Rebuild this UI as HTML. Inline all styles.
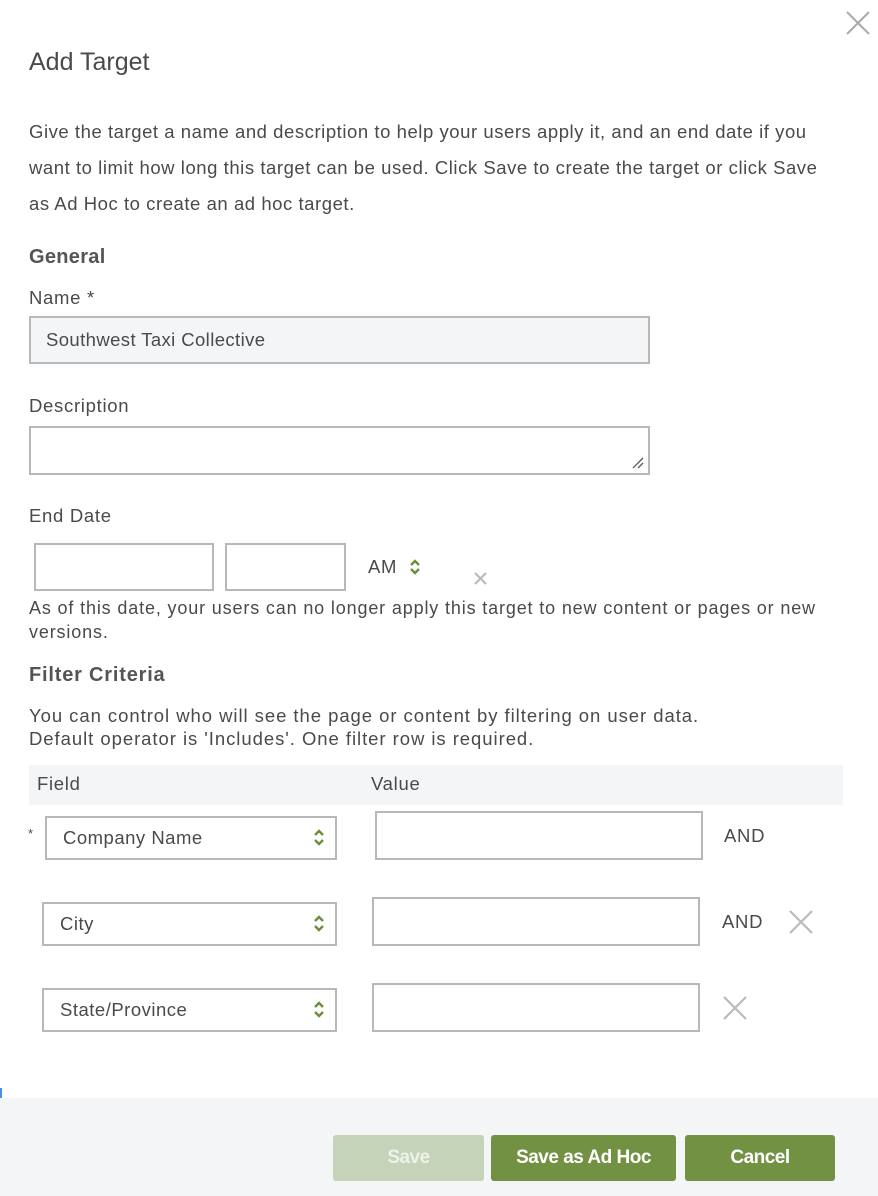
<!DOCTYPE html>
<html><head><meta charset="utf-8"><style>
*{margin:0;padding:0;box-sizing:border-box}
body{width:878px;height:1196px;background:#fff;font-family:"Liberation Sans",sans-serif;color:#4a4a4a;position:relative;overflow:hidden}
.a{position:absolute;white-space:nowrap}
.t{font-size:18.5px;letter-spacing:0.55px}
.h{font-size:20px;font-weight:bold;color:#555;letter-spacing:0.3px}
.l{font-size:18.5px;letter-spacing:0.7px}
.box{position:absolute;border:2px solid #b8b8b8;background:#fff}
.sel{position:absolute;border:2px solid #b8b8b8;background:#fff;font-size:18.5px;letter-spacing:0.5px;padding-left:16px;line-height:40px}
.arr{position:absolute;right:10px;top:10px}
.btn{position:absolute;top:1135px;height:46px;border-radius:3px;color:#fff;font-weight:bold;font-size:19px;text-align:center;line-height:46px;letter-spacing:-0.5px}
</style></head><body>
<svg class="a" style="left:846px;top:11px" width="24" height="24"><path d="M1 1L23 23M23 1L1 23" stroke="#aaa" stroke-width="2"/></svg>
<div class="a" style="left:29px;top:48px;font-size:25px;color:#4a4a4a;letter-spacing:0px">Add Target</div>
<div class="a t" style="left:29px;top:121px">Give the target a name and description to help your users apply it, and an end date if you</div>
<div class="a t" style="left:29px;top:157px">want to limit how long this target can be used. Click Save to create the target or click Save</div>
<div class="a t" style="left:29px;top:193px">as Ad Hoc to create an ad hoc target.</div>
<div class="a h" style="left:29px;top:246px">General</div>
<div class="a l" style="left:29px;top:287px">Name *</div>
<div class="box" style="left:29px;top:316px;width:621px;height:48px;background:#f4f5f7;font-size:18.5px;letter-spacing:0.4px;padding-left:15px;line-height:44px">Southwest Taxi Collective</div>
<div class="a l" style="left:29px;top:395px">Description</div>
<div class="box" style="left:29px;top:426px;width:621px;height:49px"><svg style="position:absolute;right:4px;bottom:4px" width="12" height="12"><path d="M1 11L11 1M6 11L11 6" stroke="#555" stroke-width="1.3"/></svg></div>
<div class="a l" style="left:29px;top:505px">End Date</div>
<div class="box" style="left:34px;top:543px;width:180px;height:48px"></div>
<div class="box" style="left:225px;top:543px;width:121px;height:48px"></div>
<div class="a l" style="left:368px;top:556px">AM</div>
<svg class="a" style="left:409px;top:558px" width="12" height="18"><path d="M2 7L6 3L10 7M2 11L6 15L10 11" stroke="#6b8e3a" stroke-width="2.4" fill="none"/></svg>
<svg class="a" style="left:474px;top:572px" width="13" height="13"><path d="M1 1L12 12M12 1L1 12" stroke="#bbb" stroke-width="2.2"/></svg>
<div class="a t" style="left:29px;top:598px;font-size:18px;letter-spacing:0.85px">As of this date, your users can no longer apply this target to new content or pages or new</div>
<div class="a t" style="left:29px;top:622px;font-size:18px;letter-spacing:0.85px">versions.</div>
<div class="a h" style="left:29px;top:664px;letter-spacing:0.8px">Filter Criteria</div>
<div class="a t" style="left:29px;top:705px;letter-spacing:0.95px">You can control who will see the page or content by filtering on user data.</div>
<div class="a t" style="left:29px;top:728px;letter-spacing:0.95px">Default operator is 'Includes'. One filter row is required.</div>
<div class="a" style="left:29px;top:765px;width:814px;height:40px;background:#f4f5f7"></div>
<div class="a l" style="left:37px;top:773px">Field</div>
<div class="a l" style="left:371px;top:773px">Value</div>
<div class="a" style="left:28px;top:826px;font-size:13px">*</div>
<div class="sel" style="left:45px;top:816px;width:292px;height:44px">Company Name<svg class="arr" width="12" height="20"><path d="M2 7L6 3L10 7M2 12L6 16L10 12" stroke="#6b8e3a" stroke-width="2.4" fill="none"/></svg></div>
<div class="box" style="left:375px;top:811px;width:328px;height:49px"></div>
<div class="a l" style="left:724px;top:825px">AND</div>
<div class="sel" style="left:42px;top:902px;width:295px;height:44px">City<svg class="arr" width="12" height="20"><path d="M2 7L6 3L10 7M2 12L6 16L10 12" stroke="#6b8e3a" stroke-width="2.4" fill="none"/></svg></div>
<div class="box" style="left:372px;top:897px;width:328px;height:49px"></div>
<div class="a l" style="left:722px;top:911px">AND</div>
<svg class="a" style="left:788px;top:910px" width="26" height="24"><path d="M2 1L24 23M24 1L2 23" stroke="#bbb" stroke-width="2.2"/></svg>
<div class="sel" style="left:42px;top:988px;width:295px;height:44px">State/Province<svg class="arr" width="12" height="20"><path d="M2 7L6 3L10 7M2 12L6 16L10 12" stroke="#6b8e3a" stroke-width="2.4" fill="none"/></svg></div>
<div class="box" style="left:372px;top:983px;width:328px;height:49px"></div>
<svg class="a" style="left:722px;top:996px" width="26" height="24"><path d="M2 1L24 23M24 1L2 23" stroke="#bbb" stroke-width="2.2"/></svg>
<div class="a" style="left:0;top:1088px;width:2px;height:10px;background:#4a90e2"></div>
<div class="a" style="left:0;top:1098px;width:878px;height:98px;background:#f4f5f7"></div>
<div class="btn" style="left:333px;width:151px;background:#c5d3b9;color:#eef2ea">Save</div>
<div class="btn" style="left:491px;width:185px;background:#739142">Save as Ad Hoc</div>
<div class="btn" style="left:685px;width:150px;background:#739142">Cancel</div>
</body></html>
